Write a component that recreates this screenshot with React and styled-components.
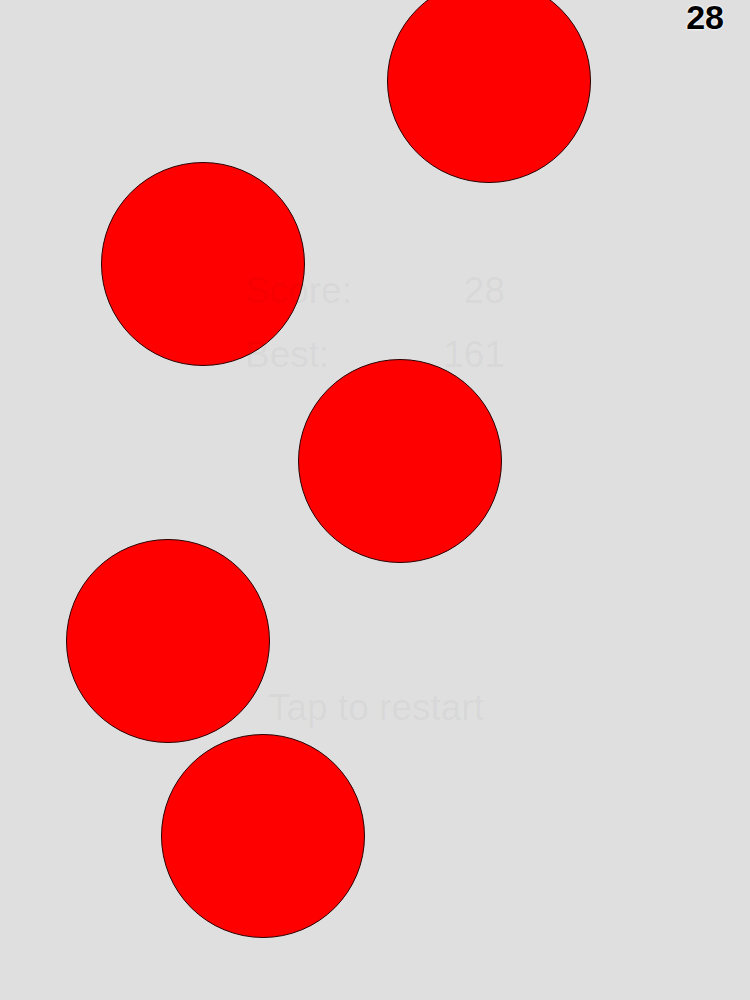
import React from "react";
import styled, { createGlobalStyle } from "styled-components";

const GlobalStyle = createGlobalStyle`
  html, body {
    margin: 0;
    padding: 0;
    background: #dfdfe0;
  }
  body {
    font-family: "Liberation Sans", Arial, sans-serif;
  }
`;

const balls = [
  { x: 537, y: -101 },
  { x: 489, y: 81 },
  { x: 203, y: 264 },
  { x: 400, y: 461 },
  { x: 168, y: 641 },
  { x: 263, y: 836 },
];

const RADIUS = 102;

const Stage = styled.div`
  position: relative;
  width: 750px;
  height: 1000px;
  overflow: hidden;
  background: #dfdfe0;
`;

// game-over panel sits faintly on top of the balls
const Overlay = styled.div`
  position: relative;
  z-index: 1;
  display: flex;
  flex-direction: column;
  align-items: center;
  padding-top: 259px;
  color: rgba(0, 0, 0, 0.05);
  font-size: 37px;
`;

const StatRow = styled.div`
  display: flex;
  justify-content: space-between;
  width: 260px;
  height: 64px;
  line-height: 64px;
`;

const Restart = styled.div`
  margin-top: 289px;
  line-height: 64px;
  padding-left: 2px;
`;

const Ball = styled.div`
  position: absolute;
  width: ${RADIUS * 2}px;
  height: ${RADIUS * 2}px;
  box-sizing: border-box;
  border-radius: 50%;
  background: #ff0000;
  border: 1.5px solid #2a0000;
`;

const Counter = styled.div`
  position: absolute;
  z-index: 2;
  top: 1px;
  right: 26px;
  font-size: 34px;
  font-weight: bold;
  line-height: 32px;
  color: #000;
  text-shadow: 0 0 3px #fff, 0 0 2px #fff;
`;

export default function App() {
  return (
    <>
      <GlobalStyle />
      <Stage>
        {balls.map((b, i) => (
          <Ball
            key={i}
            style={{ left: b.x - RADIUS, top: b.y - RADIUS }}
          />
        ))}
        <Overlay>
          <StatRow>
            <span>Score:</span>
            <span>28</span>
          </StatRow>
          <StatRow>
            <span>Best:</span>
            <span>161</span>
          </StatRow>
          <Restart>Tap to restart</Restart>
        </Overlay>
        <Counter>28</Counter>
      </Stage>
    </>
  );
}
